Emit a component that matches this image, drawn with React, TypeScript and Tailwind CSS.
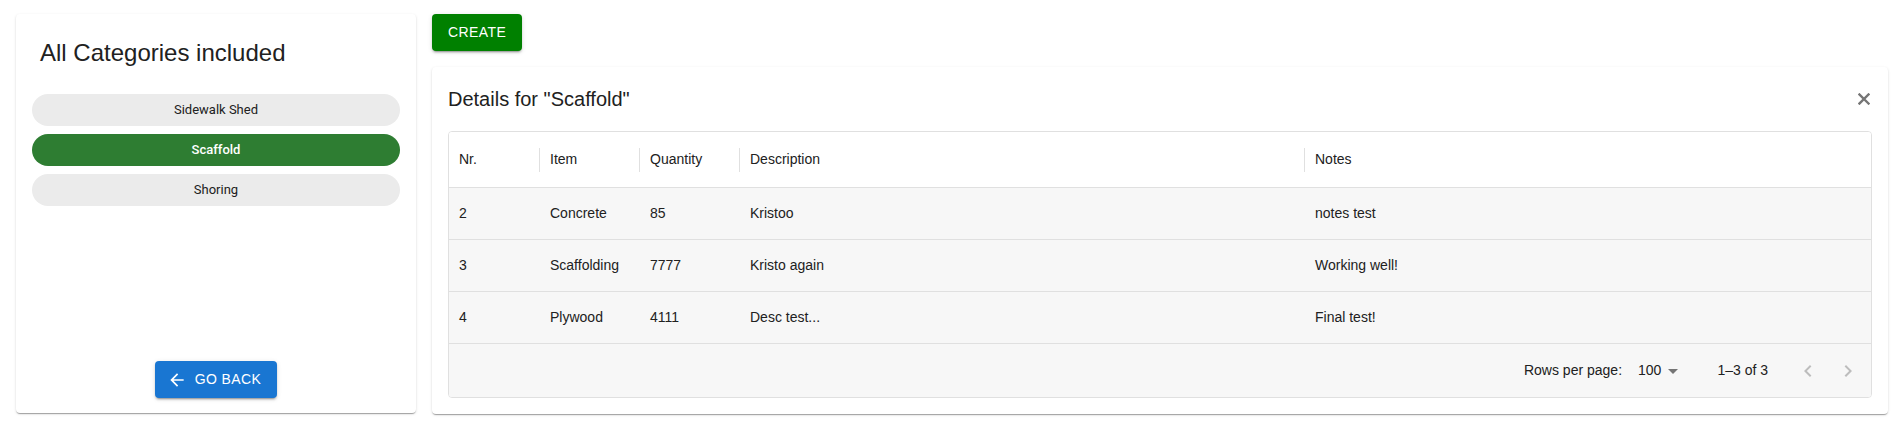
import React from "react";

const categories = ["Sidewalk Shed", "Scaffold", "Shoring"];

const columns = [
  { key: "nr", label: "Nr.", w: "w-[91px]" },
  { key: "item", label: "Item", w: "w-[100px]" },
  { key: "qty", label: "Quantity", w: "w-[100px]" },
  { key: "desc", label: "Description", w: "w-[565px]" },
  { key: "notes", label: "Notes", w: "flex-1" },
];

const rows = [
  { nr: "2", item: "Concrete", qty: "85", desc: "Kristoo", notes: "notes test" },
  { nr: "3", item: "Scaffolding", qty: "7777", desc: "Kristo again", notes: "Working well!" },
  { nr: "4", item: "Plywood", qty: "4111", desc: "Desc test...", notes: "Final test!" },
];

const paperShadow =
  "shadow-[0px_2px_1px_-1px_rgba(0,0,0,0.2),0px_1px_1px_0px_rgba(0,0,0,0.14),0px_1px_3px_0px_rgba(0,0,0,0.12)]";
const btnShadow =
  "shadow-[0px_3px_1px_-2px_rgba(0,0,0,0.2),0px_2px_2px_0px_rgba(0,0,0,0.14),0px_1px_5px_0px_rgba(0,0,0,0.12)]";

const CategoryCard = () => {
  const selected = "Scaffold";
  return (
    <div className={`w-[400px] h-[399px] bg-white rounded flex flex-col ${paperShadow}`}>
      <h2 className="px-6 pt-[23px] text-[24px] leading-8 text-[#212121]">All Categories included</h2>
      <div className="px-4 mt-[25px] flex flex-col gap-2 font-[family-name:Roboto,sans-serif]">
        {categories.map((c) =>
          c === selected ? (
            <div
              key={c}
              className="h-8 rounded-full bg-[#2e7d32] text-white text-[13px] font-medium flex items-center justify-center"
            >
              {c}
            </div>
          ) : (
            <div
              key={c}
              className="h-8 rounded-full bg-[#ebebeb] text-[#212121] text-[13px] flex items-center justify-center"
            >
              {c}
            </div>
          )
        )}
      </div>
      <div className="mt-auto mb-[15px] flex justify-center">
        <button
          className={`h-[37px] pl-3 pr-4 rounded bg-[#1976d2] text-white text-[14px] tracking-[0.4px] flex items-center gap-2 ${btnShadow}`}
        >
          <svg width="20" height="20" viewBox="0 0 24 24" fill="currentColor">
            <path d="M20 11H7.83l5.59-5.59L12 4l-8 8 8 8 1.41-1.41L7.83 13H20v-2z" />
          </svg>
          GO BACK
        </button>
      </div>
    </div>
  );
};

const DetailsTable = () => (
  <div className="border border-[#e0e0e0] rounded text-[14px] text-[#212121] overflow-hidden">
    <div className="h-[56px] flex items-center bg-white border-b border-[#e0e0e0]">
      {columns.map((col, i) => (
        <div key={col.key} className={`${col.w} h-full flex items-center`}>
          <span className="flex-1 px-[10px]">{col.label}</span>
          {i < columns.length - 1 && <div className="w-px h-6 bg-[#e0e0e0]" />}
        </div>
      ))}
    </div>
    {rows.map((r) => (
      <div key={r.nr} className="h-[52px] flex items-center bg-[#f7f7f7] border-b border-[#e0e0e0]">
        {columns.map((col) => (
          <div key={col.key} className={`${col.w} px-[10px]`}>
            {r[col.key as keyof typeof r]}
          </div>
        ))}
      </div>
    ))}
    <div className="h-[53px] flex items-center justify-end bg-[#f7f7f7] pr-[3px]">
      <span>Rows per page:</span>
      <div className="ml-2 mr-8 pl-2 flex items-center">
        <span>100</span>
        <svg width="24" height="24" viewBox="0 0 24 24" fill="#757575">
          <path d="M7 10l5 5 5-5z" />
        </svg>
      </div>
      <span>1–3 of 3</span>
      <div className="ml-5 flex items-center">
        <div className="w-10 h-10 flex items-center justify-center">
          <svg width="24" height="24" viewBox="0 0 24 24" fill="#bdbdbd">
            <path d="M15.41 16.59 10.83 12l4.58-4.59L14 6l-6 6 6 6 1.41-1.41z" />
          </svg>
        </div>
        <div className="w-10 h-10 flex items-center justify-center">
          <svg width="24" height="24" viewBox="0 0 24 24" fill="#bdbdbd">
            <path d="M8.59 16.59 13.17 12 8.59 7.41 10 6l6 6-6 6-1.41-1.41z" />
          </svg>
        </div>
      </div>
    </div>
  </div>
);

const App = () => {
  return (
    <div className="h-[434px] bg-white flex gap-4 pl-4 pr-[10px] pt-[14px] font-[family-name:Liberation_Sans,Arial,sans-serif]">
      <CategoryCard />
      <div className="flex-1 flex flex-col gap-4">
        <div>
          <button
            className={`h-[37px] px-4 rounded bg-[#008000] text-white text-[14px] tracking-[0.4px] ${btnShadow}`}
          >
            CREATE
          </button>
        </div>
        <div className={`bg-white rounded p-4 ${paperShadow}`}>
          <div className="h-8 mb-4 flex items-center justify-between">
            <h3 className="text-[20px] text-[#212121]">Details for "Scaffold"</h3>
            <svg width="12" height="12" viewBox="0 0 12 12" className="mr-[2px]">
              <path d="M1.5 1.5 10.5 10.5M10.5 1.5 1.5 10.5" stroke="#757575" strokeWidth="2.4" strokeLinecap="square" />
            </svg>
          </div>
          <DetailsTable />
        </div>
      </div>
    </div>
  );
};

export default App;
